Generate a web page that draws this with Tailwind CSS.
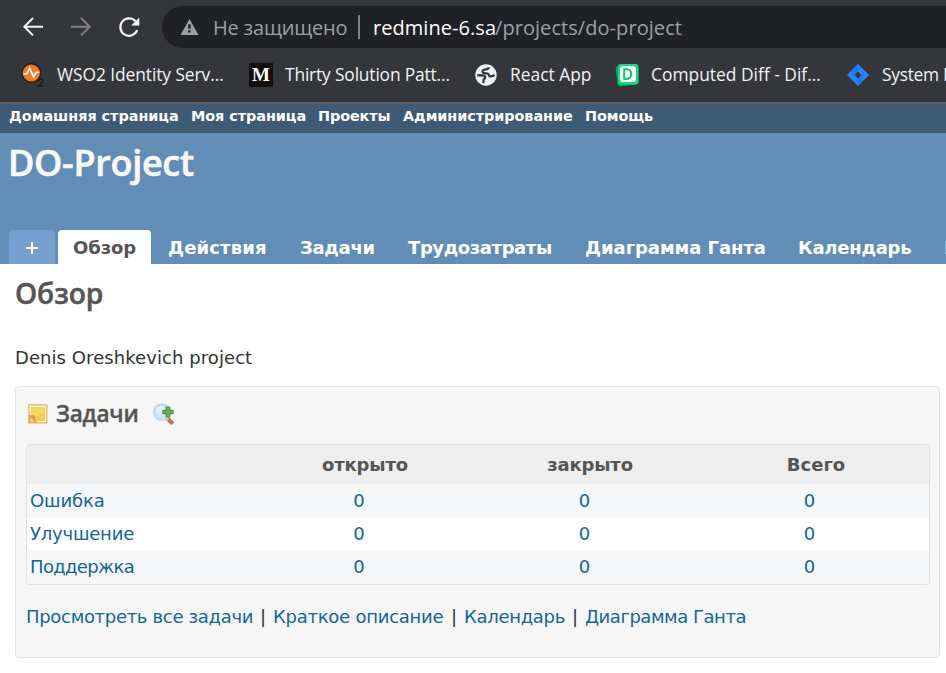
<!DOCTYPE html>
<html lang="ru">
<head>
<meta charset="utf-8">
<title>DO-Project</title>
<script src="https://cdn.jsdelivr.net/npm/@tailwindcss/browser@4"></script>
</head>
<body class="w-[946px] h-[673px] overflow-hidden bg-white font-['DejaVu_Sans',sans-serif] text-[18px] text-[#333] whitespace-nowrap">

<!-- Browser chrome -->
<div class="h-[104px] overflow-hidden bg-[#35363a] border-b-2 border-[#616163] font-['Open_Sans',sans-serif]">
  <div class="flex h-[54px]">
    <div class="flex w-[162px] pl-[22px] pt-[16px] gap-[26px] shrink-0">
      <svg class="size-[22px]" viewBox="0 0 22 22" fill="none" stroke="#f4f5f6" stroke-width="2"><path d="M21 10.7H2.5M11 2 2.3 10.7 11 19.4"/></svg>
      <svg class="size-[22px]" viewBox="0 0 22 22" fill="none" stroke="#808185" stroke-width="2"><path d="M1 10.7h18.5M11 2l8.7 8.7L11 19.4"/></svg>
      <svg class="size-[22px]" viewBox="0 0 22 22"><path d="M17.500 5.2A8.700 8.700 0 1 0 19.200 14.2" fill="none" stroke="#f4f5f6" stroke-width="2.2"/><path d="M21.3 1.500v8h-8z" fill="#f4f5f6"/></svg>
    </div>
    <div class="flex items-center w-[784px] h-[42px] mt-[6px] pl-[18px] rounded-l-full bg-[#202124] text-[20px]">
      <svg class="w-[19px] h-[18px] shrink-0" viewBox="0 0 19 18"><path d="M9.5 1 18.5 17H.5z" fill="#9aa0a6"/><path d="M8.2 6.3h2.4v4.4H8.2zM8.2 12.2h2.4v2.3H8.2z" fill="#202124"/></svg>
      <span class="w-[146px] pl-[14px] pt-[2px] leading-[40px] shrink-0 text-[#9aa0a6] tracking-[-0.2px]">Не защищено</span>
      <span class="ml-[13px] w-[2px] h-[24px] shrink-0 bg-[#808387]"></span>
      <span class="ml-[13px] pt-[2px] leading-[40px] w-[122px] shrink-0 text-white tracking-[0.05px]">redmine-6.sa</span>
      <span class="pt-[2px] leading-[40px] text-[#9aa0a6] tracking-[0.06px]">/projects/do-project</span>
    </div>
  </div>
  <div class="flex h-[41px] items-center text-[17.4px] leading-[41px] text-[#f1f3f4]">
    <div class="flex items-center w-[249px] shrink-0 pl-[21px]">
      <svg class="w-[24px] h-[26px] mr-[12px]" viewBox="0 0 24 26"><circle cx="10.3" cy="11" r="10" fill="#251f1c"/><circle cx="10.3" cy="11" r="8.6" fill="#f47b20"/><path d="M2.5 12h3.2L8.6 6.500l4 8.2 2.6-4.4h3" fill="none" stroke="#fff" stroke-width="1.7"/><path d="M17.3 18.8c.4-2.5 4.8-2.3 4.5.2-.2 1.7-2.5 3-4.3 5h5.3" fill="none" stroke="#1f1e1f" stroke-width="1.6"/></svg>
      <span class="tracking-[-0.08px]">WSO2 Identity Serv...</span>
    </div>
    <div class="flex items-center w-[226px] shrink-0">
      <span class="flex items-center justify-center size-[24px] mr-[12px] bg-[#12100e] text-white font-['Liberation_Serif',serif] font-bold text-[19px] leading-[24px]">M</span>
      <span class="tracking-[-0.17px]">Thirty Solution Patt...</span>
    </div>
    <div class="flex items-center w-[140px] shrink-0">
      <svg class="size-[22px] mr-[13px]" viewBox="0 0 22 22"><circle cx="11" cy="11" r="10.7" fill="#f1f3f4"/><path d="M14 3.400C13.200 5.600 11.500 5.500 9 5.800 6.800 6.200 7 8.800 9 9.200c2 .400 4.200-.400 4.600 1.400.300 1.500 1.400 2 2.600 1.800 1.200-.200 2.300-.700 3.400-1.400M2.200 11.400c2.500-.200 4.500-.400 6.500.200 2 .700 2 2.400.600 3.200-1.300.800-.800 2.500-.900 4.300" fill="none" stroke="#35363a" stroke-width="2.3"/></svg>
      <span>React App</span>
    </div>
    <div class="flex items-center w-[232px] shrink-0">
      <svg class="size-[24px] mr-[12px]" viewBox="0 0 24 24"><rect x="1.5" y="2" width="21" height="20.5" rx="3" fill="#00a85a" transform="rotate(-7 12 12)"/><rect x="3" y="1" width="20.5" height="20.5" rx="3" fill="#12dc82"/><rect x="5" y="3" width="16" height="16" rx="3.500" fill="#fff"/><path d="M9.2 6.300h2.800c5.600 0 5.600 9.600 0 9.600H9.2z" fill="none" stroke="#12c877" stroke-width="2.1" stroke-linejoin="round"/></svg>
      <span>Computed Diff - Dif...</span>
    </div>
    <div class="flex items-center shrink-0">
      <svg class="size-[22px] mr-[13px]" viewBox="0 0 22 22"><path d="M11 0 22 11 11 22 0 11z" fill="#2684ff"/><path d="M11 0v8L6 12.500C4.700 8 7 3.500 11 0z" fill="#1f78f2"/><path d="M11 22v-8l5-4.500c1.300 4.500-1 9-5 12.500z" fill="#1f78f2"/><path d="M11 7.600 14.400 11 11 14.400 7.600 11z" fill="#35363a"/></svg>
      <span class="tracking-[-0.3px]">System Design</span>
    </div>
  </div>
</div>

<!-- Top menu -->
<nav class="flex h-[29px] bg-[#3e5b76] pl-[9px] text-[14.4px] leading-[25px] font-bold text-white">
  <a class="w-[182px] shrink-0 tracking-[-0.03px]">Домашняя страница</a>
  <a class="w-[127px] shrink-0 tracking-[-0.05px]">Моя страница</a>
  <a class="w-[85px] shrink-0 tracking-[-0.1px]">Проекты</a>
  <a class="w-[182px] shrink-0 tracking-[-0.06px]">Администрирование</a>
  <a class="tracking-[-0.1px]">Помощь</a>
</nav>

<!-- Project header -->
<header class="flex flex-col justify-between h-[131px] overflow-hidden bg-[#628db6]">
  <h1 class="pl-[8px] pt-[5px] font-['Open_Sans',sans-serif] font-semibold [-webkit-text-stroke:0.6px_#f8f8f8] text-[36px] leading-[50px] tracking-[-0.3px] text-[#f8f8f8]">DO-Project</h1>
  <div class="flex h-[34px] pl-[9px] leading-[35px] font-bold text-white">
    <a class="flex items-center justify-center w-[46px] mr-[3px] pt-[2px] shrink-0 rounded-t-[4px] bg-[#759fcf]"><svg class="size-[12px]" viewBox="0 0 12 12" stroke="#fff" stroke-width="2"><path d="M0 6h12M6 0v12"/></svg></a>
    <a class="w-[93px] pl-[15px] mr-[17px] shrink-0 rounded-t-[4px] bg-white text-[#555] tracking-[-0.1px]">Обзор</a>
    <a class="w-[132px] shrink-0 tracking-[0.15px]">Действия</a>
    <a class="w-[108px] shrink-0 tracking-[-0.3px]">Задачи</a>
    <a class="w-[177px] shrink-0 tracking-[-0.4px]">Трудозатраты</a>
    <a class="w-[213px] shrink-0 tracking-[-0.05px]">Диаграмма Ганта</a>
    <a class="w-[146px] shrink-0 tracking-[-0.25px]">Календарь</a>
    <a class="shrink-0">Новости</a>
  </div>
</header>

<!-- Content -->
<main class="pl-[15px] pr-[6px]">
  <h2 class="pt-[8px] font-['Open_Sans',sans-serif] font-semibold [-webkit-text-stroke:0.5px_#555] text-[28.2px] leading-[42px] tracking-[-0.1px] text-[#555]">Обзор</h2>
  <p class="mt-[29px] leading-[30px] pb-[13px] tracking-[0.07px]">Denis Oreshkevich project</p>
  <section class="h-[272px] border border-[#e4e4e4] rounded-[4px] bg-[#f6f6f6] px-[10px] pr-[9px]">
    <h3 class="flex items-center h-[51px] font-['Open_Sans',sans-serif] font-semibold text-[22.6px] tracking-[-0.2px] text-[#555]">
      <svg class="size-[20px] ml-[2px] mt-[2px]" viewBox="0 0 20 20"><rect x=".8" y=".8" width="18" height="18" fill="#fff3d8" stroke="#edb869" stroke-width="1.4"/><path d="M3 3h14v14H9L3 10.500z" fill="#f5d768"/><path d="M10 10h7v7H9z" fill="#f0cd50"/><path d="M1 10.500c2.500 1.500 6 .5 6 .5s0 4.500 2.500 7.500H1z" fill="#e99b43"/><path d="M2.500 13.500 6.500 17.500h-4z" fill="#ffe3a2"/></svg>
      <span class="w-[97px] ml-[8px] pt-[2px] [-webkit-text-stroke:0.4px_#555]">Задачи</span>
      <svg class="size-[22px] mt-[3px]" viewBox="0 0 22 22"><path d="m14 15 4.500 4.500" stroke="#b77a49" stroke-width="4.200" stroke-linecap="round"/><path d="m12.500 14.500 3 2.500" stroke="#d9c8b4" stroke-width="2"/><circle cx="8.800" cy="9.200" r="8" fill="#cfe3f9" stroke="#b3cfee" stroke-width="1.300"/><ellipse cx="7.500" cy="6.500" rx="4.500" ry="3" fill="#e4f1fd"/><path d="M13.300 4h3.400v3.300H20v3.400h-3.300v3.300h-3.400v-3.300H10V7.300h3.300z" fill="#6bb356" stroke="#4a9247" stroke-width="1.200"/></svg>
    </h3>
    <table class="w-full mt-[6px] border border-[#e2e2e2] rounded-[4px] border-separate border-spacing-0 overflow-hidden table-fixed text-center bg-[#f6f7f8]">
      <thead class="bg-[#eee] text-[#555]">
        <tr class="h-[39px] leading-[38px]"><th class="w-[225px]"></th><th class="w-[226px] p-0 tracking-[-0.15px]">открыто</th><th class="w-[225px] p-0 pr-px tracking-[-0.15px]">закрыто</th><th class="p-0">Всего</th></tr>
      </thead>
      <tbody class="text-[#116699] leading-[33px]">
        <tr class="h-[33px] bg-[#f6f7f8]"><td class="p-0 pl-[3px] text-left tracking-[-0.1px]">Ошибка</td><td class="p-0 pr-[12px]">0</td><td class="p-0 pr-[12px]">0</td><td class="p-0 pr-[13px]">0</td></tr>
        <tr class="h-[33px] bg-white"><td class="p-0 pl-[3px] text-left tracking-[-0.2px]">Улучшение</td><td class="p-0 pr-[12px]">0</td><td class="p-0 pr-[12px]">0</td><td class="p-0 pr-[13px]">0</td></tr>
        <tr class="h-[34px] bg-[#f6f7f8]"><td class="p-0 pl-[3px] text-left align-top tracking-[-0.65px]">Поддержка</td><td class="p-0 pr-[12px] align-top">0</td><td class="p-0 pr-[12px] align-top">0</td><td class="p-0 pr-[13px] align-top">0</td></tr>
      </tbody>
    </table>
    <p class="flex mt-[16px] leading-[32px] text-[#116699]">
      <a class="w-[233px] shrink-0 tracking-[-0.31px]">Просмотреть все задачи</a><span class="w-[14px] pl-px text-[#333] shrink-0">|</span>
      <a class="w-[177px] shrink-0 tracking-[-0.25px]">Краткое описание</a><span class="w-[14px] pl-px text-[#333] shrink-0">|</span>
      <a class="w-[107px] shrink-0 tracking-[-0.3px]">Календарь</a><span class="w-[14px] pl-px text-[#333] shrink-0">|</span>
      <a class="tracking-[-0.46px]">Диаграмма Ганта</a>
    </p>
  </section>
</main>
</body>
</html>
